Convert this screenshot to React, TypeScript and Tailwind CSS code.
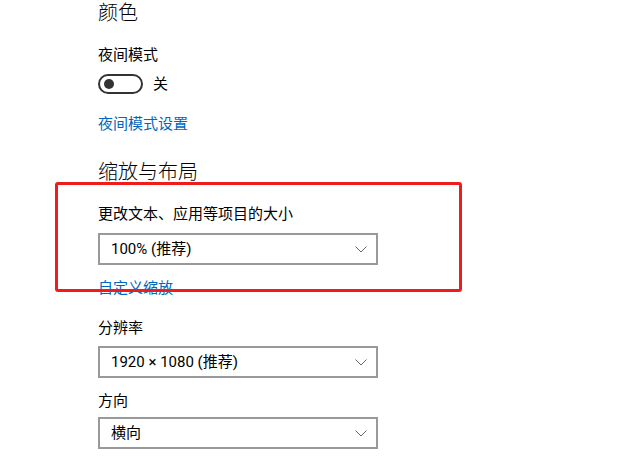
import type { ReactNode } from 'react'

const FONT = { fontFamily: 'Roboto, "Noto Sans CJK SC", sans-serif' }

function Chevron() {
  return (
    <svg width="12" height="7" viewBox="0 0 12 7" className="shrink-0">
      <path d="M0.5 0.5 L6 6 L11.5 0.5" fill="none" stroke="#666" strokeWidth="1" />
    </svg>
  )
}

function Select({ value, className = '' }: { value: string; className?: string }) {
  return (
    <div className={`w-[280px] h-[32px] border-2 border-[#999] flex items-center justify-between pl-[11px] pr-[9px] text-[15px] text-black ${className}`}>
      <span className="leading-[20px]">{value}</span>
      <Chevron />
    </div>
  )
}

function Label({ children, link = false, className = '' }: { children: ReactNode; link?: boolean; className?: string }) {
  return (
    <p className={`m-0 text-[15px] leading-[20px] ${link ? 'text-[#0067c0]' : 'text-black'} ${className}`}>
      {children}
    </p>
  )
}

function Heading({ children, className = '' }: { children: ReactNode; className?: string }) {
  return <h2 className={`m-0 text-[20px] leading-[28px] font-light text-black ${className}`}>{children}</h2>
}

export default function App() {
  return (
    <div className="relative w-[642px] h-[460px] bg-white overflow-hidden" style={FONT}>
      <div className="flex flex-col items-start pl-[98px]">
        <Heading className="-mt-[1px]">颜色</Heading>
        <Label className="mt-[18px]">夜间模式</Label>
        <div className="mt-[9px] flex items-center gap-[10px]">
          <div className="w-[45px] h-[20px] rounded-full border-2 border-[#333] flex items-center pl-[4px]">
            <div className="w-[10px] h-[10px] rounded-full bg-[#333]" />
          </div>
          <span className="text-[15px] leading-[20px] text-black">关</span>
        </div>
        <Label link className="mt-[20px]">夜间模式设置</Label>
        <Heading className="mt-[24px]">缩放与布局</Heading>
        <Label className="mt-[18px]">更改文本、应用等项目的大小</Label>
        <Select value="100% (推荐)" className="mt-[9px]" />
        <Label link className="mt-[13px]">自定义缩放</Label>
        <Label className="mt-[20px]">分辨率</Label>
        <Select value="1920 × 1080 (推荐)" className="mt-[8px]" />
        <Label className="mt-[13px]">方向</Label>
        <Select value="横向" className="mt-[6px]" />
      </div>
      {/* annotation box drawn over the settings */}
      <div className="absolute left-[55px] top-[182px] w-[407px] h-[110px] border-[3px] border-[#f01c1c] rounded-[3px]" />
    </div>
  )
}
